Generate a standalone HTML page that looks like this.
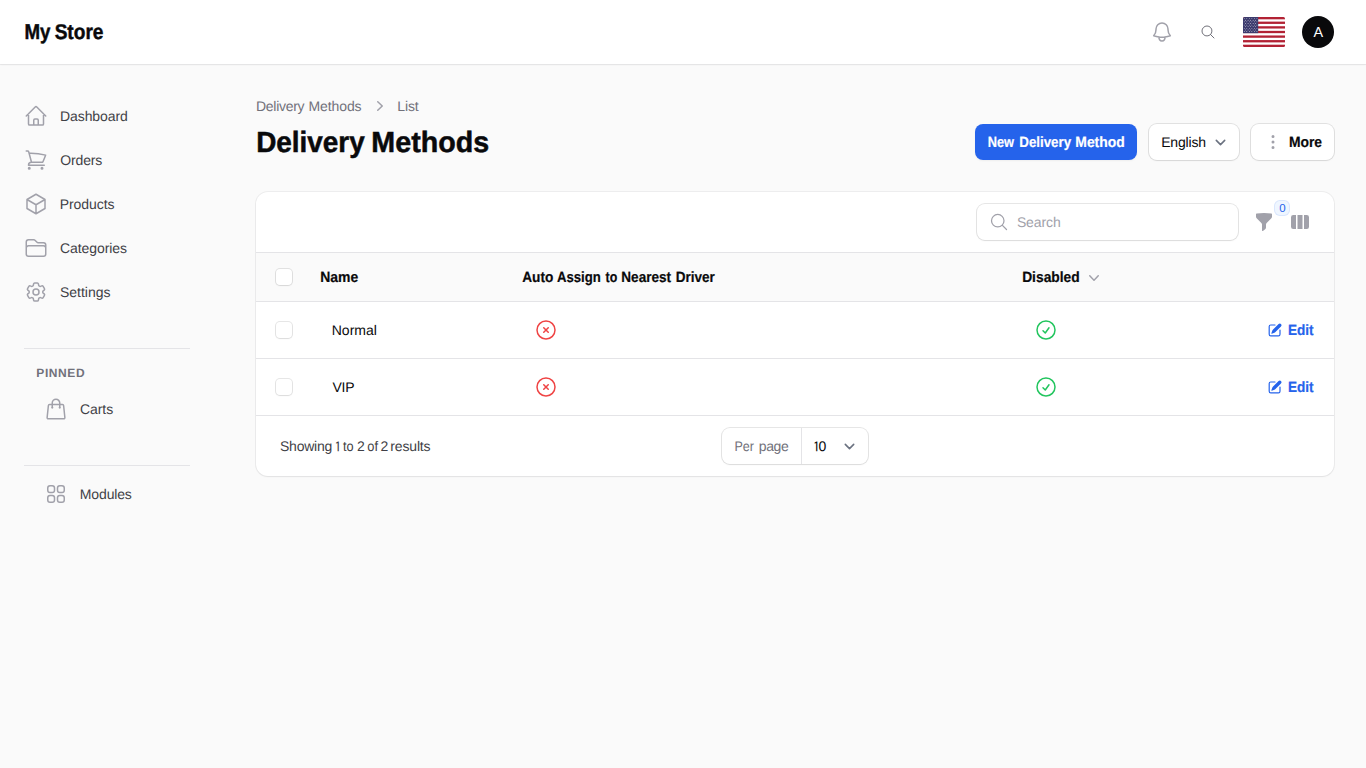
<!DOCTYPE html>
<html lang="en">
<head>
<meta charset="utf-8">
<title>Delivery Methods - My Store</title>
<style>
*{box-sizing:border-box;margin:0;padding:0}
html,body{width:1366px;height:768px;overflow:hidden}
body{background:#fafafa;font-family:"Liberation Sans",sans-serif;color:#09090b;font-size:14px;line-height:20px;text-rendering:geometricPrecision}
.abs,.w{position:absolute}
.w{white-space:nowrap;transform-origin:0 50%}
.d1{font-family:"IPAGothic","Liberation Sans",sans-serif;margin-top:1px}
svg{display:block}
.topbar{position:absolute;left:0;top:0;width:1366px;height:64px;background:#fff;box-shadow:0 0 0 1px rgba(9,9,11,.05),0 1px 2px 0 rgba(0,0,0,.05)}
.brand{font-size:21.3px;line-height:28px;font-weight:700;-webkit-text-stroke:.45px #09090b}
.avatar{position:absolute;left:1302px;top:16px;width:32px;height:32px;border-radius:50%;background:#09090b}
.avt{color:#fff;font-size:14.4px}
.nav{color:#3f3f46}
.hr{position:absolute;left:24px;width:166px;height:1px;background:#e4e4e7}
.pinned{font-size:12px;font-weight:700;color:#71717a}
.bc{color:#71717a}
.title{font-size:29.2px;line-height:36px;font-weight:700;-webkit-text-stroke:.5px #09090b}
.box{position:absolute;border-radius:8px;background:#fff;box-shadow:0 0 0 1px rgba(9,9,11,.1),0 1px 2px 0 rgba(0,0,0,.05)}
.primary{position:absolute;border-radius:8px;background:#2563eb;box-shadow:0 1px 2px 0 rgba(0,0,0,.05)}
.b{font-weight:700;font-size:14.8px;-webkit-text-stroke:.2px}
.white{color:#fff}
.card{position:absolute;left:256px;top:192px;width:1078px;height:284px;background:#fff;border-radius:12px;box-shadow:0 0 0 1px rgba(9,9,11,.05),0 1px 2px 0 rgba(0,0,0,.05)}
.thead{position:absolute;left:256px;top:252px;width:1078px;height:50px;background:#fafafa;border-top:1px solid #e4e4e7;border-bottom:1px solid #e4e4e7}
.line{position:absolute;left:256px;width:1078px;height:1px;background:#e4e4e7}
.cb{position:absolute;left:276px;width:16px;height:16px;border-radius:4px;background:#fff;box-shadow:0 0 0 1px rgba(9,9,11,.1),0 1px 2px 0 rgba(0,0,0,.05)}
.ph{color:#a1a1aa}
.link{font-weight:700;font-size:14.8px;color:#2563eb;-webkit-text-stroke:.2px}
.muted{color:#3f3f46}
.gray{color:#71717a}
.badge{position:absolute;left:1274px;top:200px;width:16px;height:16px;border-radius:6px;background:#eff6ff;box-shadow:inset 0 0 0 1px rgba(37,99,235,.1)}
.bt{font-size:11.5px;color:#2563eb}
</style>
</head>
<body>
<header>
  <div class="topbar"></div>
  <a class="brand"><span class="w" style="left:24px;top:18px;transform:translateX(0.51px) scaleX(0.878)">My</span> <span class="w" style="left:54px;top:18px;transform:translateX(0.64px) scaleX(0.896)">Store</span></a>
  <svg class="abs" style="left:1150px;top:20px;color:#a1a1aa" width="24" height="24" viewBox="0 0 24 24" fill="none" stroke="currentColor" stroke-width="1.5" stroke-linecap="round" stroke-linejoin="round"><path d="M14.857 17.082a23.848 23.848 0 005.454-1.31A8.967 8.967 0 0118 9.750v-.7V9A6 6 0 006 9v.750a8.967 8.967 0 01-2.312 6.022c1.733.64 3.560 1.085 5.455 1.310m5.714 0a24.255 24.255 0 01-5.714 0m5.714 0a3 3 0 11-5.714 0"/></svg>
  <svg class="abs" style="left:1200px;top:24px;color:#71717a" width="16" height="16" viewBox="0 0 24 24" fill="none" stroke="currentColor" stroke-width="1.5" stroke-linecap="round" stroke-linejoin="round"><path d="M21 21l-5.197-5.197m0 0A7.500 7.500 0 105.196 5.196a7.500 7.500 0 0010.607 10.607z"/></svg>
  <div class="abs" style="left:1243px;top:17px;width:42px;height:30px;border-radius:1.5px;overflow:hidden"><svg width="42" height="30" viewBox="0 0 42 30"><g><rect width="42" height="30" fill="#fff"/><rect y="0.000" width="42" height="2.308" fill="#b22234"/><rect y="4.615" width="42" height="2.308" fill="#b22234"/><rect y="9.231" width="42" height="2.308" fill="#b22234"/><rect y="13.846" width="42" height="2.308" fill="#b22234"/><rect y="18.462" width="42" height="2.308" fill="#b22234"/><rect y="23.077" width="42" height="2.308" fill="#b22234"/><rect y="27.692" width="42" height="2.308" fill="#b22234"/><rect width="15.2" height="16.154" fill="#3c3b6e"/><g fill="#fff"><circle cx="1.27" cy="1.62" r=".43"/><circle cx="3.80" cy="1.62" r=".43"/><circle cx="6.33" cy="1.62" r=".43"/><circle cx="8.87" cy="1.62" r=".43"/><circle cx="11.40" cy="1.62" r=".43"/><circle cx="13.93" cy="1.62" r=".43"/><circle cx="2.53" cy="3.23" r=".43"/><circle cx="5.07" cy="3.23" r=".43"/><circle cx="7.60" cy="3.23" r=".43"/><circle cx="10.13" cy="3.23" r=".43"/><circle cx="12.67" cy="3.23" r=".43"/><circle cx="1.27" cy="4.85" r=".43"/><circle cx="3.80" cy="4.85" r=".43"/><circle cx="6.33" cy="4.85" r=".43"/><circle cx="8.87" cy="4.85" r=".43"/><circle cx="11.40" cy="4.85" r=".43"/><circle cx="13.93" cy="4.85" r=".43"/><circle cx="2.53" cy="6.46" r=".43"/><circle cx="5.07" cy="6.46" r=".43"/><circle cx="7.60" cy="6.46" r=".43"/><circle cx="10.13" cy="6.46" r=".43"/><circle cx="12.67" cy="6.46" r=".43"/><circle cx="1.27" cy="8.08" r=".43"/><circle cx="3.80" cy="8.08" r=".43"/><circle cx="6.33" cy="8.08" r=".43"/><circle cx="8.87" cy="8.08" r=".43"/><circle cx="11.40" cy="8.08" r=".43"/><circle cx="13.93" cy="8.08" r=".43"/><circle cx="2.53" cy="9.69" r=".43"/><circle cx="5.07" cy="9.69" r=".43"/><circle cx="7.60" cy="9.69" r=".43"/><circle cx="10.13" cy="9.69" r=".43"/><circle cx="12.67" cy="9.69" r=".43"/><circle cx="1.27" cy="11.31" r=".43"/><circle cx="3.80" cy="11.31" r=".43"/><circle cx="6.33" cy="11.31" r=".43"/><circle cx="8.87" cy="11.31" r=".43"/><circle cx="11.40" cy="11.31" r=".43"/><circle cx="13.93" cy="11.31" r=".43"/><circle cx="2.53" cy="12.92" r=".43"/><circle cx="5.07" cy="12.92" r=".43"/><circle cx="7.60" cy="12.92" r=".43"/><circle cx="10.13" cy="12.92" r=".43"/><circle cx="12.67" cy="12.92" r=".43"/><circle cx="1.27" cy="14.54" r=".43"/><circle cx="3.80" cy="14.54" r=".43"/><circle cx="6.33" cy="14.54" r=".43"/><circle cx="8.87" cy="14.54" r=".43"/><circle cx="11.40" cy="14.54" r=".43"/><circle cx="13.93" cy="14.54" r=".43"/></g></g></svg></div>
  <div class="avatar"></div><span class="avt"><span class="w" style="left:1313.51px;top:23px">A</span></span>
</header>
<nav>
  <svg class="abs" style="left:24px;top:104px;color:#a1a1aa" width="24" height="24" viewBox="0 0 24 24" fill="none" stroke="currentColor" stroke-width="1.5" stroke-linecap="round" stroke-linejoin="round"><path d="M2.250 12l8.954-8.955c.44-.439 1.152-.439 1.591 0L21.750 12M4.500 9.750v10.125c0 .621.504 1.125 1.125 1.125H9.750v-4.875c0-.621.504-1.125 1.125-1.125h2.250c.621 0 1.125.504 1.125 1.125V21h4.125c.621 0 1.125-.504 1.125-1.125V9.750M8.250 21h8.250"/></svg><a class="nav"><span class="w" style="left:60.09px;top:106px;letter-spacing:-0.10px">Dashboard</span></a>
  <svg class="abs" style="left:24px;top:148px;color:#a1a1aa" width="24" height="24" viewBox="0 0 24 24" fill="none" stroke="currentColor" stroke-width="1.5" stroke-linecap="round" stroke-linejoin="round"><path d="M2.250 3h1.386c.51 0 .955.343 1.087.835l.383 1.437M7.500 14.250a3 3 0 00-3 3h15.750m-12.750-3h11.218c1.121-2.300 2.100-4.684 2.924-7.138a60.114 60.114 0 00-16.536-1.840M7.500 14.250L5.106 5.272M6 20.250a.75.75 0 11-1.500 0 .75.75 0 011.500 0zm12.750 0a.75.75 0 11-1.500 0 .75.75 0 011.500 0z"/></svg><a class="nav"><span class="w" style="left:60.37px;top:150px;letter-spacing:-0.16px">Orders</span></a>
  <svg class="abs" style="left:24px;top:192px;color:#a1a1aa" width="24" height="24" viewBox="0 0 24 24" fill="none" stroke="currentColor" stroke-width="1.5" stroke-linecap="round" stroke-linejoin="round"><path d="M21 7.500l-9-5.250L3 7.500m18 0l-9 5.250m9-5.250v9l-9 5.250M3 7.500l9 5.250M3 7.500v9l9 5.250m0-9v9"/></svg><a class="nav"><span class="w" style="left:59.78px;top:194px;letter-spacing:-0.08px">Products</span></a>
  <svg class="abs" style="left:24px;top:236px;color:#a1a1aa" width="24" height="24" viewBox="0 0 24 24" fill="none" stroke="currentColor" stroke-width="1.5" stroke-linecap="round" stroke-linejoin="round"><path d="M2.250 12.750V12A2.250 2.250 0 014.500 9.750h15A2.250 2.250 0 0121.750 12v.75m-8.690-6.440l-2.120-2.120a1.500 1.500 0 00-1.061-.44H4.500A2.250 2.250 0 002.250 6v12a2.250 2.250 0 002.250 2.250h15A2.250 2.250 0 0021.750 18V9a2.250 2.250 0 00-2.250-2.250h-5.379a1.500 1.500 0 01-1.060-.44z"/></svg><a class="nav"><span class="w" style="left:60.06px;top:238px;letter-spacing:-0.09px">Categories</span></a>
  <svg class="abs" style="left:24px;top:280px;color:#a1a1aa" width="24" height="24" viewBox="0 0 24 24" fill="none" stroke="currentColor" stroke-width="1.5" stroke-linecap="round" stroke-linejoin="round"><path d="M9.594 3.940c.09-.542.56-.94 1.110-.94h2.593c.55 0 1.020.398 1.110.94l.213 1.281c.063.374.313.686.645.870.074.040.147.083.220.127.324.196.720.257 1.075.124l1.217-.456a1.125 1.125 0 011.370.490l1.296 2.247a1.125 1.125 0 01-.26 1.431l-1.003.827c-.293.240-.438.613-.431.992a6.759 6.759 0 010 .255c-.007.378.138.750.430.990l1.005.828c.424.350.534.954.260 1.430l-1.298 2.247a1.125 1.125 0 01-1.369.491l-1.217-.456c-.355-.133-.75-.072-1.076.124a6.570 6.570 0 01-.22.128c-.331.183-.581.495-.644.869l-.213 1.280c-.09.543-.56.941-1.110.941h-2.594c-.55 0-1.020-.398-1.110-.94l-.213-1.281c-.062-.374-.312-.686-.644-.87a6.520 6.520 0 01-.22-.127c-.325-.196-.72-.257-1.076-.124l-1.217.456a1.125 1.125 0 01-1.369-.49l-1.297-2.247a1.125 1.125 0 01.260-1.431l1.004-.827c.292-.24.437-.613.430-.992a6.932 6.932 0 010-.255c.007-.378-.138-.75-.43-.99l-1.004-.828a1.125 1.125 0 01-.26-1.430l1.297-2.247a1.125 1.125 0 011.370-.491l1.216.456c.356.133.751.072 1.076-.124.072-.044.146-.087.220-.128.332-.183.582-.495.644-.869l.214-1.281z"/><path d="M15 12a3 3 0 11-6 0 3 3 0 016 0z"/></svg><a class="nav"><span class="w" style="left:59.97px;top:282px;letter-spacing:-0.02px">Settings</span></a>
  <div class="hr" style="top:348px"></div>
  <span class="pinned"><span class="w" style="left:36.30px;top:363px;letter-spacing:0.59px">PINNED</span></span>
  <svg class="abs" style="left:44px;top:397px;color:#a1a1aa" width="24" height="24" viewBox="0 0 24 24" fill="none" stroke="currentColor" stroke-width="1.5" stroke-linecap="round" stroke-linejoin="round"><path d="M15.750 10.500V6a3.750 3.750 0 10-7.500 0v4.500m11.356-1.993l1.263 12c.07.665-.45 1.243-1.119 1.243H4.250a1.125 1.125 0 01-1.120-1.243l1.264-12A1.125 1.125 0 015.513 7.500h12.974c.576 0 1.059.435 1.119 1.007zM8.625 10.500a.375.375 0 11-.75 0 .375.375 0 01.75 0zm7.500 0a.375.375 0 11-.75 0 .375.375 0 01.75 0z"/></svg><a class="nav"><span class="w" style="left:80.05px;top:399px;letter-spacing:-0.09px">Carts</span></a>
  <div class="hr" style="top:465px"></div>
  <svg class="abs" style="left:44px;top:482px;color:#a1a1aa" width="24" height="24" viewBox="0 0 24 24" fill="none" stroke="currentColor" stroke-width="1.5" stroke-linecap="round" stroke-linejoin="round"><path d="M3.750 6A2.250 2.250 0 016 3.750h2.250A2.250 2.250 0 0110.500 6v2.250a2.250 2.250 0 01-2.250 2.250H6a2.250 2.250 0 01-2.250-2.250V6zM3.750 15.750A2.250 2.250 0 016 13.500h2.250a2.250 2.250 0 012.250 2.250V18a2.250 2.250 0 01-2.250 2.250H6A2.250 2.250 0 013.750 18v-2.250zM13.500 6a2.250 2.250 0 012.250-2.250H18A2.250 2.250 0 0120.250 6v2.250A2.250 2.250 0 0118 10.500h-2.250a2.250 2.250 0 01-2.250-2.250V6zM13.500 15.750a2.250 2.250 0 012.250-2.250H18a2.250 2.250 0 012.250 2.250V18A2.250 2.250 0 0118 20.250h-2.250A2.250 2.250 0 0113.500 18v-2.250z"/></svg><a class="nav"><span class="w" style="left:79.85px;top:484px;letter-spacing:-0.15px">Modules</span></a>
</nav>
<main>
  <div class="bc"><span class="w" style="left:256.01px;top:96px;letter-spacing:-0.28px">Delivery</span> <span class="w" style="left:308.45px;top:96px;letter-spacing:-0.09px">Methods</span></div>
  <svg class="abs" style="left:370px;top:96px;color:#a1a1aa" width="20" height="20" viewBox="0 0 20 20" fill="currentColor"><path fill-rule="evenodd" clip-rule="evenodd" d="M7.210 14.770a.75.75 0 01.020-1.060L11.168 10 7.230 6.290a.75.75 0 111.040-1.080l4.500 4.250a.75.75 0 010 1.080l-4.500 4.250a.75.75 0 01-1.060-.020z"/></svg>
  <div class="bc"><span class="w" style="left:397.29px;top:96px;letter-spacing:-0.14px">List</span></div>
  <h1 class="title"><span class="w" style="left:256px;top:125px;transform:translateX(0.16px) scaleX(0.956)">Delivery</span> <span class="w" style="left:371px;top:125px;transform:translateX(0.37px) scaleX(0.981)">Methods</span></h1>
  <div class="primary" style="left:975px;top:124px;width:162px;height:36px"></div><span class="b white"><span class="w" style="left:987px;top:133px;transform:translateX(0.64px) scaleX(0.866)">New</span> <span class="w" style="left:1019px;top:133px;transform:translateX(0.33px) scaleX(0.899)">Delivery</span> <span class="w" style="left:1075px;top:133px;transform:translateX(0.32px) scaleX(0.939)">Method</span></span>
  <div class="box" style="left:1149px;top:124px;width:90px;height:36px"></div><span><span class="w" style="left:1161.17px;top:132px;letter-spacing:-0.18px">English</span></span><svg class="abs" style="left:1210px;top:132px" width="21" height="21" viewBox="0 0 20 20" fill="none" stroke="#6b7280" stroke-width="1.5" stroke-linecap="round" stroke-linejoin="round"><path d="M6 8l4 4 4-4"/></svg>
  <div class="box" style="left:1251px;top:124px;width:83px;height:36px"></div><svg class="abs" style="left:1263px;top:132px;color:#a1a1aa" width="20" height="20" viewBox="0 0 20 20" fill="currentColor"><path fill-rule="evenodd" clip-rule="evenodd" d="M10 3a1.500 1.500 0 110 3 1.500 1.500 0 010-3zM10 8.500a1.500 1.500 0 110 3 1.500 1.500 0 010-3zM11.500 15.500a1.500 1.500 0 10-3 0 1.500 1.500 0 003 0z"/></svg><span class="b"><span class="w" style="left:1288px;top:133px;transform:translateX(0.96px) scaleX(0.937)">More</span></span>
  <div class="card"></div>
  <div class="box" style="left:977px;top:204px;width:261px;height:36px"></div>
  <svg class="abs" style="left:989px;top:212px;color:#a1a1aa" width="20" height="20" viewBox="0 0 24 24" fill="none" stroke="currentColor" stroke-width="1.5" stroke-linecap="round" stroke-linejoin="round"><path d="M21 21l-5.197-5.197m0 0A7.500 7.500 0 105.196 5.196a7.500 7.500 0 0010.607 10.607z"/></svg><span class="ph"><span class="w" style="left:1016.90px;top:212px;letter-spacing:-0.11px">Search</span></span>
  <svg class="abs" style="left:1254px;top:212px;color:#a1a1aa" width="20" height="20" viewBox="0 0 20 20" fill="currentColor"><path fill-rule="evenodd" clip-rule="evenodd" d="M2.628 1.601C5.028 1.206 7.490 1 10 1s4.973.206 7.372.601a.75.75 0 01.628.74v2.288a2.250 2.250 0 01-.659 1.590l-4.682 4.683a2.250 2.250 0 00-.659 1.590v3.037c0 .684-.31 1.330-.844 1.757l-1.937 1.550A.75.75 0 018 18.250v-5.757a2.250 2.250 0 00-.659-1.591L2.659 6.220A2.250 2.250 0 012 4.629V2.340a.75.75 0 01.628-.74z"/></svg>
  <div class="badge"></div><span class="bt"><span class="w" style="left:1279.31px;top:199px">0</span></span>
  <svg class="abs" style="left:1290px;top:212px;color:#a1a1aa" width="20" height="20" viewBox="0 0 20 20" fill="currentColor"><path fill-rule="evenodd" clip-rule="evenodd" d="M14 17h2.750A2.250 2.250 0 0019 14.750v-9.500A2.250 2.250 0 0016.750 3H14v14zM12.500 3h-5v14h5V3zM3.250 3H6v14H3.250A2.250 2.250 0 011 14.750v-9.500A2.250 2.250 0 013.250 3z"/></svg>
  <div class="thead"></div>
  <div class="cb" style="top:269px"></div>
  <span class="b"><span class="w" style="left:320px;top:268px;transform:translateX(0.18px) scaleX(0.943)">Name</span></span>
  <span class="b"><span class="w" style="left:522px;top:268px;transform:translateX(0.24px) scaleX(0.923)">Auto</span> <span class="w" style="left:556px;top:268px;transform:translateX(0.88px) scaleX(0.891)">Assign</span> <span class="w" style="left:605px;top:268px;transform:translateX(0.54px) scaleX(0.838)">to</span> <span class="w" style="left:621px;top:268px;transform:translateX(0.29px) scaleX(0.918)">Nearest</span> <span class="w" style="left:675px;top:268px;transform:translateX(0.70px) scaleX(0.915)">Driver</span></span>
  <span class="b"><span class="w" style="left:1022px;top:268px;transform:translateX(0.13px) scaleX(0.934)">Disabled</span></span><svg class="abs" style="left:1084px;top:268px;color:#a1a1aa" width="20" height="20" viewBox="0 0 20 20" fill="currentColor"><path fill-rule="evenodd" clip-rule="evenodd" d="M5.230 7.210a.75.75 0 011.060.020L10 11.168l3.710-3.938a.75.75 0 111.080 1.040l-4.250 4.500a.75.75 0 01-1.080 0l-4.250-4.500a.75.75 0 01.020-1.060z"/></svg>
  <div class="cb" style="top:322px"></div>
  <span><span class="w" style="left:331.70px;top:320px;letter-spacing:0.03px">Normal</span></span>
  <svg class="abs" style="left:534px;top:318px;color:#ef4444" width="24" height="24" viewBox="0 0 24 24" fill="none" stroke="currentColor" stroke-width="1.5" stroke-linecap="round" stroke-linejoin="round"><path d="M9.750 9.750l4.500 4.500m0-4.500l-4.500 4.500M21 12a9 9 0 11-18 0 9 9 0 0118 0z"/></svg>
  <svg class="abs" style="left:1034px;top:318px;color:#22c55e" width="24" height="24" viewBox="0 0 24 24" fill="none" stroke="currentColor" stroke-width="1.5" stroke-linecap="round" stroke-linejoin="round"><path d="M9 12.750L11.250 15 15 9.750M21 12a9 9 0 11-18 0 9 9 0 0118 0z"/></svg>
  <svg class="abs" style="left:1267px;top:322px;color:#2563eb" width="16" height="16" viewBox="0 0 20 20" fill="currentColor"><path d="M5.433 13.917l1.262-3.155A4 4 0 017.580 9.420l6.920-6.918a2.121 2.121 0 013 3l-6.920 6.918c-.383.383-.84.685-1.343.886l-3.154 1.262a.5.500 0 01-.65-.65z"/><path d="M3.500 5.750c0-.69.56-1.250 1.250-1.250H10A.75.75 0 0010 3H4.750A2.750 2.750 0 002 5.750v9.500A2.750 2.750 0 004.750 18h9.500A2.750 2.750 0 0017 15.250V10a.75.75 0 00-1.500 0v5.250c0 .69-.56 1.250-1.250 1.250h-9.500c-.69 0-1.250-.56-1.250-1.250v-9.500z"/></svg><a class="link"><span class="w" style="left:1287px;top:321px;transform:translateX(0.97px) scaleX(0.918)">Edit</span></a>
  <div class="line" style="top:358px"></div>
  <div class="cb" style="top:379px"></div>
  <span><span class="w" style="left:332.44px;top:377px;letter-spacing:-0.23px">VIP</span></span>
  <svg class="abs" style="left:534px;top:375px;color:#ef4444" width="24" height="24" viewBox="0 0 24 24" fill="none" stroke="currentColor" stroke-width="1.5" stroke-linecap="round" stroke-linejoin="round"><path d="M9.750 9.750l4.500 4.500m0-4.500l-4.500 4.500M21 12a9 9 0 11-18 0 9 9 0 0118 0z"/></svg>
  <svg class="abs" style="left:1034px;top:375px;color:#22c55e" width="24" height="24" viewBox="0 0 24 24" fill="none" stroke="currentColor" stroke-width="1.5" stroke-linecap="round" stroke-linejoin="round"><path d="M9 12.750L11.250 15 15 9.750M21 12a9 9 0 11-18 0 9 9 0 0118 0z"/></svg>
  <svg class="abs" style="left:1267px;top:379px;color:#2563eb" width="16" height="16" viewBox="0 0 20 20" fill="currentColor"><path d="M5.433 13.917l1.262-3.155A4 4 0 017.580 9.420l6.920-6.918a2.121 2.121 0 013 3l-6.920 6.918c-.383.383-.84.685-1.343.886l-3.154 1.262a.5.500 0 01-.65-.65z"/><path d="M3.500 5.750c0-.69.56-1.250 1.250-1.250H10A.75.75 0 0010 3H4.750A2.750 2.750 0 002 5.750v9.500A2.750 2.750 0 004.750 18h9.500A2.750 2.750 0 0017 15.250V10a.75.75 0 00-1.500 0v5.250c0 .69-.56 1.250-1.250 1.250h-9.500c-.69 0-1.250-.56-1.250-1.250v-9.500z"/></svg><a class="link"><span class="w" style="left:1287px;top:378px;transform:translateX(0.97px) scaleX(0.918)">Edit</span></a>
  <div class="line" style="top:415px"></div>
  <span class="muted"><span class="w" style="left:279.98px;top:436px;letter-spacing:-0.23px">Showing</span> <span class="w d1" style="left:334.55px;top:436px">1</span> <span class="w" style="left:343px;top:436px;transform:translateX(0.02px) scaleX(0.909)">to</span> <span class="w" style="left:357.12px;top:436px">2</span> <span class="w" style="left:367px;top:436px;transform:translateX(0.23px) scaleX(0.918)">of</span> <span class="w" style="left:380.54px;top:436px">2</span> <span class="w" style="left:390.25px;top:436px;letter-spacing:-0.15px">results</span></span>
  <div class="box" style="left:722px;top:428px;width:146px;height:36px"></div>
  <div class="abs" style="left:801px;top:428px;width:1px;height:36px;background:#e4e4e7"></div>
  <span class="gray"><span class="w" style="left:734px;top:436px;transform:translateX(0.40px) scaleX(0.896)">Per</span> <span class="w" style="left:758.74px;top:436px;letter-spacing:-0.37px">page</span></span>
  <span><span class="w d1" style="left:813.01px;top:436px">1</span><span class="w" style="left:818.57px;top:436px">0</span></span><svg class="abs" style="left:839px;top:436px" width="21" height="21" viewBox="0 0 20 20" fill="none" stroke="#6b7280" stroke-width="1.5" stroke-linecap="round" stroke-linejoin="round"><path d="M6 8l4 4 4-4"/></svg>
</main>
</body>
</html>
